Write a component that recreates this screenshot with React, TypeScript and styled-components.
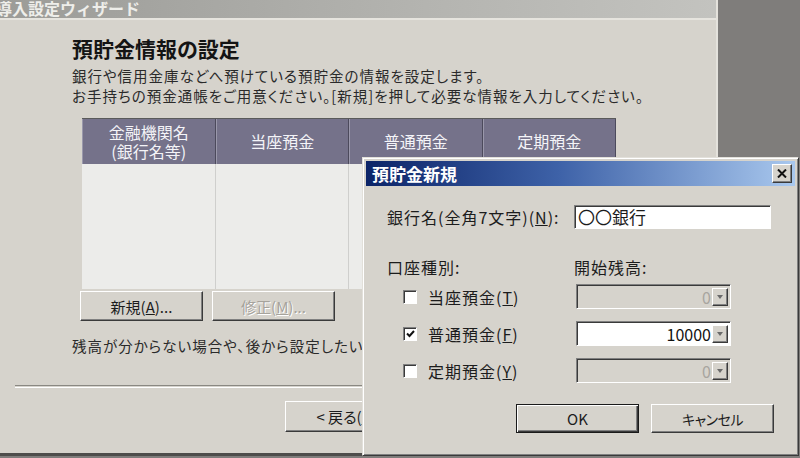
import React from "react";
import styled, { createGlobalStyle, css } from "styled-components";

const GlobalStyle = createGlobalStyle`
    html, body {
        margin: 0;
        padding: 0;
    }
    body {
        width: 800px;
        height: 458px;
        overflow: hidden;
        background: #7f7d7b;
        font-family: "Noto Sans CJK JP", "Liberation Sans", sans-serif;
        font-feature-settings: "palt";
        color: #1c1c1c;
    }
`;

const Desktop = styled.div`
    position: relative;
    width: 800px;
    height: 458px;
    overflow: hidden;
    background: #7f7d7b;
`;

// windows sit on the desktop at their own coordinates
const Window = styled.div`
    position: absolute;
    box-sizing: border-box;
    display: flex;
    flex-direction: column;
    background: #d6d3cc;
`;

const WizardWindow = styled(Window)`
    left: -10px;
    top: -2px;
    width: 728px;
    height: 458px;
    border-right: 2px solid #e4e2dc;
    border-bottom: 3px solid #4e4d4b;
`;

const DialogWindow = styled(Window)`
    left: 362px;
    top: 157px;
    width: 437px;
    height: 299px;
    padding: 3px;
    border: 1px solid;
    border-color: #e2e0da #3a3a3a #3a3a3a #e2e0da;
    box-shadow: inset 1px 1px #ffffff, inset -1px -1px #808080;
`;

const TitleBar = styled.div<{ $active?: boolean }>`
    flex: none;
    display: flex;
    align-items: center;
    justify-content: space-between;
    box-sizing: border-box;
    height: ${(p) => (p.$active ? 25 : 22)}px;
    padding: 0 3px 0 ${(p) => (p.$active ? 6 : 6)}px;
    font-weight: bold;
    font-size: ${(p) => (p.$active ? 17 : 16)}px;
    font-feature-settings: normal;
    color: ${(p) => (p.$active ? "#ffffff" : "#eeeeea")};
    background: ${(p) =>
        p.$active
            ? "linear-gradient(90deg, #0c2468 0%, #3e62a8 45%, #a9c8ee 100%)"
            : "linear-gradient(90deg, #9b9b97 0%, #b4b4b0 60%, #c3c3bf 100%)"};
    ${(p) =>
        !p.$active &&
        css`
            border-bottom: 2px solid #e6e4de;
        `}
`;

const CloseButton = styled.div`
    box-sizing: border-box;
    width: 20px;
    height: 19px;
    display: flex;
    align-items: center;
    justify-content: center;
    background: #d6d3cc;
    border: 1px solid;
    border-color: #ffffff #3a3a3a #3a3a3a #ffffff;
    box-shadow: inset -1px -1px #808080;
`;

const WizardBody = styled.div`
    flex: 1;
    display: flex;
    flex-direction: column;
    padding: 16px 0 0 82px;
`;

const Heading = styled.h1`
    margin: 0;
    font-size: 21px;
    line-height: 24px;
    font-weight: bold;
    color: #141414;
`;

const Lead = styled.p`
    margin: 6px 0 0;
    font-size: 14.5px;
    line-height: 20px;
    letter-spacing: 1px;
    color: #2a2a2a;
    white-space: nowrap;
`;

const ListView = styled.div`
    margin: 12px 0 0 10px;
    width: 534px;
    height: 170px;
    display: grid;
    grid-template-columns: repeat(4, 1fr);
    grid-template-rows: 45px 1fr;
    background: #ececea;
    border-top: 1px solid #5a5a5a;
`;

const HeaderCell = styled.div`
    display: flex;
    align-items: center;
    justify-content: center;
    text-align: center;
    font-size: 16px;
    line-height: 19px;
    font-feature-settings: normal;
    color: #f4f4f8;
    background: #75728a;
    border-left: 1px solid #9a98ab;
    border-right: 1px solid #4c4a5c;
`;

const BodyCell = styled.div`
    border-right: 1px solid #cfcfcd;
`;

const ButtonRow = styled.div<{ $gap: number }>`
    display: flex;
    gap: ${(p) => p.$gap}px;
`;

const ListButtons = styled(ButtonRow)`
    margin: 2px 0 0 8px;
`;

const PushButton = styled.button<{ $isDefault?: boolean; $h?: number }>`
    box-sizing: border-box;
    width: 123px;
    height: ${(p) => p.$h ?? 30}px;
    padding: 0;
    font-family: inherit;
    font-feature-settings: "palt";
    font-size: 15px;
    color: #1c1c1c;
    background: #d6d3cc;
    border: 1px solid;
    border-color: #ffffff #3a3a3a #3a3a3a #ffffff;
    box-shadow: inset -1px -1px #808080;
    ${(p) =>
        p.$isDefault &&
        css`
            border: 1px solid #1a1a1a;
            box-shadow: inset 1px 1px #ffffff, inset -1px -1px #3a3a3a,
                inset -2px -2px #808080;
        `}
    &:disabled {
        color: #a6a39c;
        text-shadow: 1px 1px 0 #ffffff;
    }
`;

const NarrowLabel = styled.span`
    font-size: 14px;
    letter-spacing: -0.5px;
`;

const Note = styled.p`
    margin: 15px 0 0;
    font-size: 14.5px;
    line-height: 20px;
    letter-spacing: 1px;
    color: #2a2a2a;
    white-space: nowrap;
`;

const Separator = styled.div`
    margin: 29px 0 0 -57px;
    height: 1px;
    border-top: 1px solid #8a8882;
    border-bottom: 1px solid #ffffff;
`;

const NavButtons = styled(ButtonRow)`
    margin-top: 13px;
    padding-left: 213px;
`;

const NavGroup = styled.div`
    display: flex;
`;

const DialogBody = styled.div`
    flex: 1;
    display: flex;
    flex-direction: column;
    padding: 19px 0 0 21px;
    font-size: 16px;
    line-height: 20px;
    letter-spacing: 1px;
    font-feature-settings: normal;
`;

const FormRow = styled.div<{ $top: number }>`
    display: flex;
    align-items: center;
    margin-top: ${(p) => p.$top}px;
`;

const LabelCell = styled.div<{ $indent?: number }>`
    box-sizing: border-box;
    width: 187px;
    padding-left: ${(p) => p.$indent ?? 0}px;
    display: flex;
    align-items: center;
    white-space: nowrap;
`;

const TextBox = styled.div`
    box-sizing: border-box;
    width: 197px;
    height: 24px;
    padding: 0 3px;
    display: flex;
    align-items: center;
    background: #ffffff;
    border: 1px solid;
    border-color: #808080 #ffffff #ffffff #808080;
    box-shadow: inset 1px 1px #3a3a3a;
    font-size: 17px;
    letter-spacing: 0;
`;

const SpinBox = styled.div<{ $enabled?: boolean }>`
    box-sizing: border-box;
    width: 155px;
    height: 25px;
    margin-left: 2px;
    display: flex;
    align-items: center;
    justify-content: flex-end;
    padding: 2px;
    background: ${(p) => (p.$enabled ? "#ffffff" : "#d6d3cc")};
    border: 1px solid;
    border-color: #808080 #ffffff #ffffff #808080;
    box-shadow: inset 1px 1px #3a3a3a;
    color: ${(p) => (p.$enabled ? "#111111" : "#a8a59f")};
    font-size: 16px;
    letter-spacing: 0;
`;

const SpinValue = styled.span`
    padding-right: 1px;
`;

const SpinArrow = styled.div`
    box-sizing: border-box;
    width: 16px;
    height: 18px;
    display: flex;
    align-items: center;
    justify-content: center;
    background: #d6d3cc;
    border: 1px solid;
    border-color: #ffffff #3a3a3a #3a3a3a #ffffff;
    box-shadow: inset -1px -1px #808080;
`;

const CheckBox = styled.span`
    box-sizing: border-box;
    flex: none;
    width: 14px;
    height: 14px;
    margin-right: 11px;
    display: inline-flex;
    align-items: center;
    justify-content: center;
    background: #ffffff;
    border: 1px solid;
    border-color: #808080 #ffffff #ffffff #808080;
    box-shadow: inset 1px 1px #3a3a3a;
`;

const DialogButtons = styled(ButtonRow)`
    margin-top: 21px;
    padding-right: 21px;
    justify-content: flex-end;
    letter-spacing: 0;
`;

interface AccountRow {
    label: string;
    key: string;
    checked: boolean;
    value: string;
}

const accounts: AccountRow[] = [
    { label: "当座預金", key: "T", checked: false, value: "0" },
    { label: "普通預金", key: "F", checked: true, value: "10000" },
    { label: "定期預金", key: "Y", checked: false, value: "0" },
];

const Wizard: React.FC = () => (
    <WizardWindow>
        <TitleBar>
            <span>導入設定ウィザード</span>
        </TitleBar>
        <WizardBody>
            <Heading>預貯金情報の設定</Heading>
            <Lead>
                銀行や信用金庫などへ預けている預貯金の情報を設定します。
                <br />
                お手持ちの預金通帳をご用意ください。[新規]を押して必要な情報を入力してください。
            </Lead>
            <ListView>
                <HeaderCell>
                    金融機関名
                    <br />
                    (銀行名等)
                </HeaderCell>
                <HeaderCell>当座預金</HeaderCell>
                <HeaderCell>普通預金</HeaderCell>
                <HeaderCell>定期預金</HeaderCell>
                <BodyCell />
                <BodyCell />
                <BodyCell />
                <BodyCell />
            </ListView>
            <ListButtons $gap={9}>
                <PushButton>
                    新規(<u>A</u>)...
                </PushButton>
                <PushButton disabled>
                    修正(<u>M</u>)...
                </PushButton>
            </ListButtons>
            <Note>残高が分からない場合や、後から設定したい場合は、[次へ]を押してください。</Note>
            <Separator />
            <NavButtons $gap={10}>
                <NavGroup>
                    <PushButton $h={31}>
                        &lt; 戻る(<u>B</u>)
                    </PushButton>
                    <PushButton $h={31} $isDefault>
                        次へ(<u>N</u>) &gt;
                    </PushButton>
                </NavGroup>
                <PushButton $h={31}>キャンセル</PushButton>
            </NavButtons>
        </WizardBody>
    </WizardWindow>
);

const CloseGlyph: React.FC = () => (
    <svg width="10" height="9" viewBox="0 0 10 9">
        <path d="M1 0.5 L9 8.5 M9 0.5 L1 8.5" stroke="#111" strokeWidth="2" />
    </svg>
);

const CheckGlyph: React.FC = () => (
    <svg width="9" height="8" viewBox="0 0 9 8">
        <path d="M1 3.5 L3.5 6 L8 1" stroke="#111" strokeWidth="2" fill="none" />
    </svg>
);

const ArrowGlyph: React.FC = () => (
    <svg width="6" height="4" viewBox="0 0 6 4">
        <path d="M0 0 H6 L3 4 Z" fill="#6a6a6a" />
    </svg>
);

const NewDepositDialog: React.FC = () => (
    <DialogWindow>
        <TitleBar $active>
            <span>預貯金新規</span>
            <CloseButton>
                <CloseGlyph />
            </CloseButton>
        </TitleBar>
        <DialogBody>
            <FormRow $top={0}>
                <LabelCell>
                    銀行名(全角7文字)(<u>N</u>):
                </LabelCell>
                <TextBox>〇〇銀行</TextBox>
            </FormRow>
            <FormRow $top={28}>
                <LabelCell>口座種別:</LabelCell>
                <span>開始残高:</span>
            </FormRow>
            {accounts.map((a, i) => (
                <FormRow key={a.key} $top={i === 0 ? 7 : 12}>
                    <LabelCell $indent={16}>
                        <CheckBox>{a.checked && <CheckGlyph />}</CheckBox>
                        {a.label}(<u>{a.key}</u>)
                    </LabelCell>
                    <SpinBox $enabled={a.checked}>
                        <SpinValue>{a.value}</SpinValue>
                        <SpinArrow>
                            <ArrowGlyph />
                        </SpinArrow>
                    </SpinBox>
                </FormRow>
            ))}
            <DialogButtons $gap={12}>
                <PushButton $h={29} $isDefault>
                    OK
                </PushButton>
                <PushButton $h={29}>
                    <NarrowLabel>キャンセル</NarrowLabel>
                </PushButton>
            </DialogButtons>
        </DialogBody>
    </DialogWindow>
);

const App: React.FC = () => (
    <Desktop>
        <GlobalStyle />
        <Wizard />
        <NewDepositDialog />
    </Desktop>
);

export default App;
